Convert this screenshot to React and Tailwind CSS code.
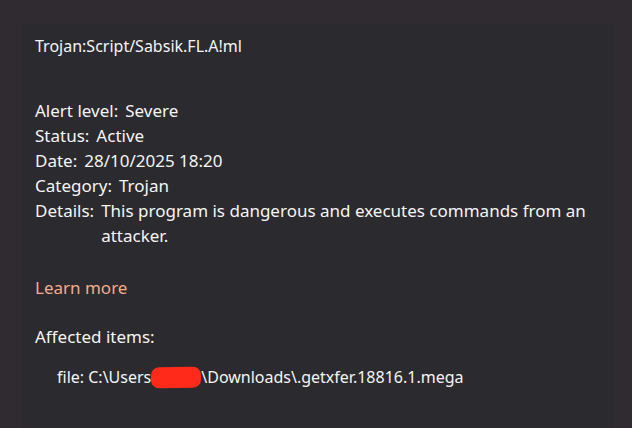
import React from "react";

const rows = [
    { label: "Alert level:", value: "Severe" },
    { label: "Status:", value: "Active" },
    { label: "Date:", value: "28/10/2025 18:20" },
    { label: "Category:", value: "Trojan" },
    { label: "Details:", value: "This program is dangerous and executes commands from an attacker." },
];

const App = () => {
    return (
        <div
            className="w-[632px] h-[428px] overflow-hidden bg-[#2f2b30] pt-[24px] pl-[21px] pr-[19px]"
            style={{ fontFamily: '"Noto Sans", "Open Sans", sans-serif' }}
        >
            <div className="h-full bg-[#2b2a2e] pl-[14px] pr-[10px] pt-[12px] text-[#f5f5f5]">
                <div className="text-[16px] leading-[20px]">Trojan:Script/Sabsik.FL.A!ml</div>

                <div className="mt-[42px] flex flex-col text-[17px] leading-[25px]">
                    {rows.map((r) => (
                        <div key={r.label} className="flex gap-[7px]">
                            <span className="shrink-0">{r.label}</span>
                            <span>{r.value}</span>
                        </div>
                    ))}
                </div>

                <div className="mt-[27px] text-[17px] leading-[25px] text-[#f4ab8d]">Learn more</div>

                <div className="mt-[24px] text-[17px] leading-[25px]">Affected items:</div>

                <div className="mt-[16px] pl-[22px] text-[16px] leading-[24px] flex items-center">
                    <span>file: C:\Users</span>
                    <span className="inline-block w-[50px] h-[21px] bg-[#ff2a1a] rounded-[8px] -rotate-1"></span>
                    <span>\Downloads\.getxfer.18816.1.mega</span>
                </div>
            </div>
        </div>
    );
};

export default App;
